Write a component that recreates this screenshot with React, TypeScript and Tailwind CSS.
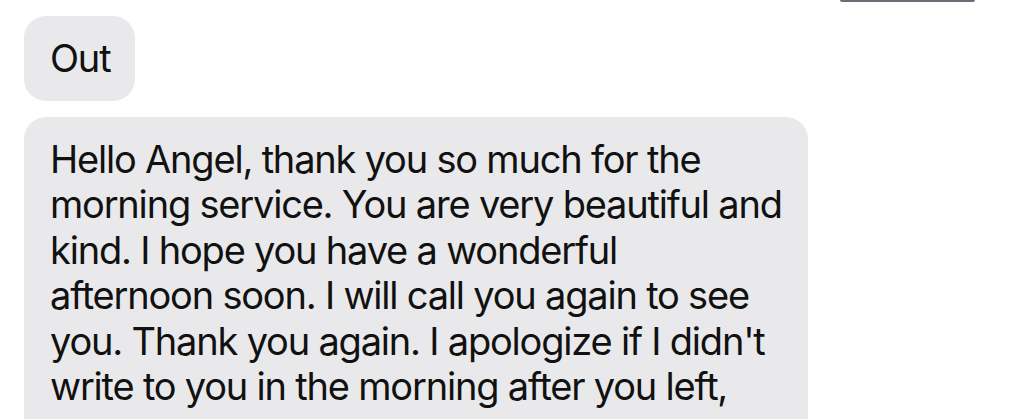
import React from "react";

const lines = [
  "Hello Angel, thank you so much for the",
  "morning service. You are very beautiful and",
  "kind. I hope you have a wonderful",
  "afternoon soon. I will call you again to see",
  "you. Thank you again. I apologize if I didn't",
  "write to you in the morning after you left,",
];

export default function App() {
  return (
    <div
      className="w-[1024px] h-[419px] overflow-hidden bg-white text-[#111111]"
      style={{ fontFamily: "Inter, 'Noto Sans', sans-serif" }}
    >
      <div className="flex">
        <div className="ml-[840px] h-[2px] w-[135px] rounded-b-full bg-[#6f6b78]" />
      </div>
      <div className="flex flex-col items-start gap-4 pl-6 pt-[14px]">
        <div className="rounded-[22px] bg-[#e9e9eb] pl-[26px] pr-[25px] pt-[20px] pb-[19px] text-[38px] leading-[45.5px] tracking-[-1.2px]">
          Out
        </div>
        <div className="w-[784px] rounded-[22px] bg-[#e9e9eb] px-[26px] pt-[20px] pb-[19px] text-[38px] leading-[45.5px] tracking-[-1.2px]">
          {lines.map((l, i) => (
            <div key={i} className="whitespace-nowrap">
              {l}
            </div>
          ))}
          <div className="mt-[8px] whitespace-nowrap">so I was not able to say thank you.</div>
        </div>
      </div>
    </div>
  );
}
